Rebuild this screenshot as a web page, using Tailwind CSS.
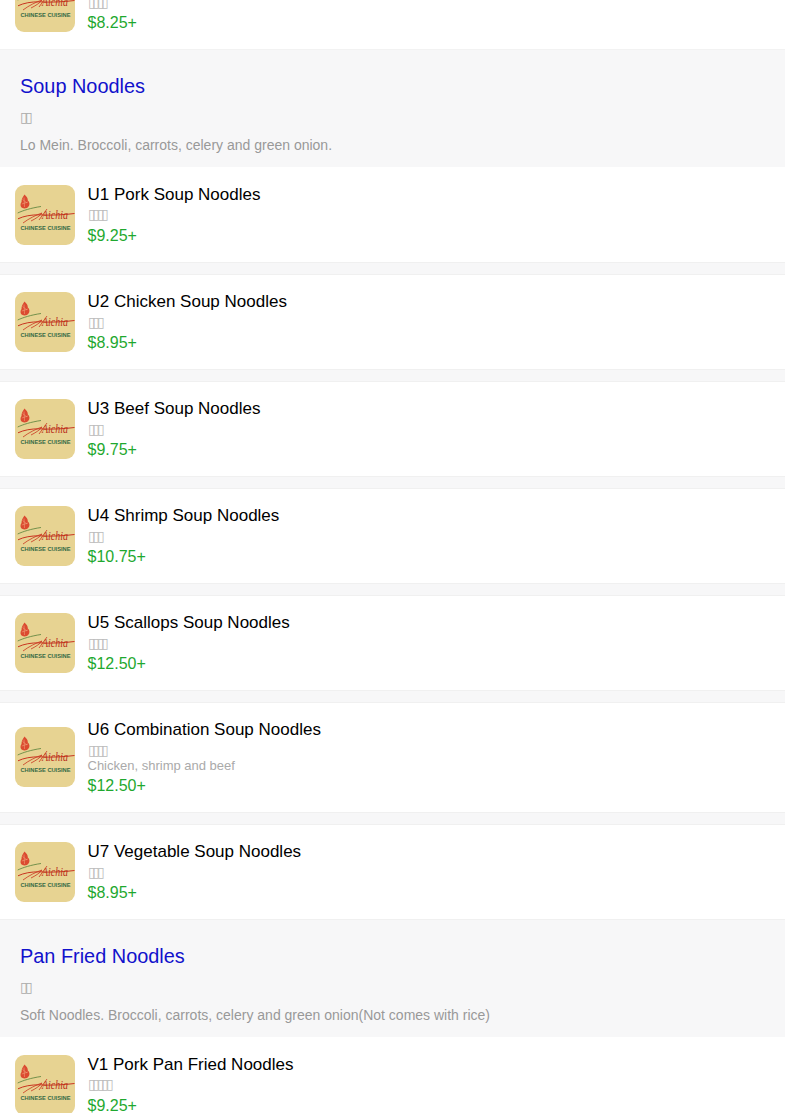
<!DOCTYPE html>
<html><head><meta charset="utf-8"><script src="https://cdn.jsdelivr.net/npm/@tailwindcss/browser@4"></script></head>
<body class="bg-white font-['Liberation_Sans',sans-serif]">
<svg width="0" height="0" class="absolute"><defs>
<symbol id="logo" viewBox="0 0 60 60">
<rect width="60" height="60" rx="9" fill="#e7d392"/>
<path d="M9.5 9.5 C11.5 11.5 13 13 12.8 15.5 C14.8 17 15 20 13.5 21.5 C12.5 23.5 9 24 7 22.8 C5 21.5 5.3 18.5 6.5 17 C6.3 14 8 12 9.5 9.5Z" fill="#db4a30"/>
<path d="M7.5 14.5 L12 18 M6.8 19 L13 17 M9 12.5 L9.5 22" stroke="#efa079" stroke-width=".6" fill="none"/>
<path d="M2.7 28 C8 25.5 16 23 26 21.5" stroke="#55803a" stroke-width=".8" fill="none"/>
<path d="M3 33.8 C9 31 16 29.8 24 29.8 C36 30.5 48 30 59.5 28.5" stroke="#c9341f" stroke-width="1" fill="none"/>
<path d="M8 38 C14 33.5 21 30 27 28 C25 31 20 34 16 36 M24 35 L32 24" stroke="#c9341f" stroke-width=".8" fill="none"/>
<text x="27" y="33.5" font-family="'Liberation Serif',serif" font-style="italic" font-size="12" fill="#b92f1b" textLength="26" lengthAdjust="spacingAndGlyphs">Aichia</text>
<text x="5.5" y="44.8" font-family="'Liberation Sans',sans-serif" font-weight="700" font-size="6" fill="#356a45" textLength="50" lengthAdjust="spacingAndGlyphs">CHINESE CUISINE</text>
</symbol></defs></svg>
<div class="h-[1113px] overflow-hidden bg-[#f7f7f8]">

<div class="-mt-[46px] flex items-center gap-[12.5px] bg-white h-[95px] pl-[15px]">
<svg class="w-[60px] h-[60px] shrink-0"><use href="#logo"/></svg>
<div class="flex flex-col"><div class="h-5"></div><div class="text-[14px] leading-[15px] mt-[3.5px] tracking-[-3.4px] text-[#bbb]">▯▯▯▯</div><div class="text-base leading-5 mt-[2.5px] -mb-[1px] text-[#1fa82f]">$8.25+</div></div>
</div>

<div class="h-[118px] bg-[#f7f7f8] border-t border-[#f2f2f2] px-5 pt-[24px]">
<div class="text-[19.9px] leading-6 text-[#1111cc]">Soup Noodles</div>
<div class="text-[14px] leading-4 mt-[11px] tracking-[-3.4px] text-[#aaa]">▯▯</div>
<div class="text-sm leading-5 mt-[10px] text-[#999]">Lo Mein. Broccoli, carrots, celery and green onion.</div>
</div>

<div class="flex flex-col gap-[11px]">
<div class="flex items-center gap-[12.5px] bg-white border-b border-[#f0f0f0] pl-[15px] py-[17.5px]">
<svg class="w-[60px] h-[60px] shrink-0"><use href="#logo"/></svg>
<div class="flex flex-col"><div class="text-[17px] leading-5 text-black">U1 Pork Soup Noodles</div><div class="text-[14px] leading-[15px] mt-[2.5px] tracking-[-3.4px] text-[#bbb]">▯▯▯▯</div><div class="text-base leading-5 mt-[3.5px] -mb-[1px] text-[#1fa82f]">$9.25+</div></div>
</div>
<div class="flex items-center gap-[12.5px] bg-white border-y border-[#f0f0f0] pl-[15px] py-[17px]">
<svg class="w-[60px] h-[60px] shrink-0"><use href="#logo"/></svg>
<div class="flex flex-col"><div class="text-[17px] leading-5 text-black">U2 Chicken Soup Noodles</div><div class="text-[14px] leading-[15px] mt-[2.5px] tracking-[-3.4px] text-[#bbb]">▯▯▯</div><div class="text-base leading-5 mt-[3.5px] -mb-[1px] text-[#1fa82f]">$8.95+</div></div>
</div>
<div class="flex items-center gap-[12.5px] bg-white border-y border-[#f0f0f0] pl-[15px] py-[17px]">
<svg class="w-[60px] h-[60px] shrink-0"><use href="#logo"/></svg>
<div class="flex flex-col"><div class="text-[17px] leading-5 text-black">U3 Beef Soup Noodles</div><div class="text-[14px] leading-[15px] mt-[2.5px] tracking-[-3.4px] text-[#bbb]">▯▯▯</div><div class="text-base leading-5 mt-[3.5px] -mb-[1px] text-[#1fa82f]">$9.75+</div></div>
</div>
<div class="flex items-center gap-[12.5px] bg-white border-y border-[#f0f0f0] pl-[15px] py-[17px]">
<svg class="w-[60px] h-[60px] shrink-0"><use href="#logo"/></svg>
<div class="flex flex-col"><div class="text-[17px] leading-5 text-black">U4 Shrimp Soup Noodles</div><div class="text-[14px] leading-[15px] mt-[2.5px] tracking-[-3.4px] text-[#bbb]">▯▯▯</div><div class="text-base leading-5 mt-[3.5px] -mb-[1px] text-[#1fa82f]">$10.75+</div></div>
</div>
<div class="flex items-center gap-[12.5px] bg-white border-y border-[#f0f0f0] pl-[15px] py-[17px]">
<svg class="w-[60px] h-[60px] shrink-0"><use href="#logo"/></svg>
<div class="flex flex-col"><div class="text-[17px] leading-5 text-black">U5 Scallops Soup Noodles</div><div class="text-[14px] leading-[15px] mt-[2.5px] tracking-[-3.4px] text-[#bbb]">▯▯▯▯</div><div class="text-base leading-5 mt-[3.5px] -mb-[1px] text-[#1fa82f]">$12.50+</div></div>
</div>
<div class="flex items-center gap-[12.5px] bg-white border-y border-[#f0f0f0] pl-[15px] py-[17px]">
<svg class="w-[60px] h-[60px] shrink-0 mb-[1px]"><use href="#logo"/></svg>
<div class="flex flex-col"><div class="text-[17px] leading-5 text-black">U6 Combination Soup Noodles</div><div class="text-[14px] leading-[15px] mt-[2.5px] tracking-[-3.4px] text-[#bbb]">▯▯▯▯</div><div class="text-[13px] leading-[15px] text-[#aaa]">Chicken, shrimp and beef</div><div class="text-base leading-5 mt-[3.5px] -mb-[1px] text-[#1fa82f]">$12.50+</div></div>
</div>
<div class="flex items-center gap-[12.5px] bg-white border-y border-[#f0f0f0] pl-[15px] py-[17px]">
<svg class="w-[60px] h-[60px] shrink-0"><use href="#logo"/></svg>
<div class="flex flex-col"><div class="text-[17px] leading-5 text-black">U7 Vegetable Soup Noodles</div><div class="text-[14px] leading-[15px] mt-[2.5px] tracking-[-3.4px] text-[#bbb]">▯▯▯</div><div class="text-base leading-5 mt-[3.5px] -mb-[1px] text-[#1fa82f]">$8.95+</div></div>
</div>
</div>

<div class="h-[117px] bg-[#f7f7f8] px-5 pt-[24px]">
<div class="text-[19.9px] leading-6 text-[#1111cc]">Pan Fried Noodles</div>
<div class="text-[14px] leading-4 mt-[11px] tracking-[-3.4px] text-[#aaa]">▯▯</div>
<div class="text-sm leading-5 mt-[10px] text-[#999]">Soft Noodles. Broccoli, carrots, celery and green onion(Not comes with rice)</div>
</div>
<div class="flex items-center gap-[12.5px] bg-white pl-[15px] py-[17.5px]">
<svg class="w-[60px] h-[60px] shrink-0"><use href="#logo"/></svg>
<div class="flex flex-col"><div class="text-[17px] leading-5 text-black">V1 Pork Pan Fried Noodles</div><div class="text-[14px] leading-[15px] mt-[2.5px] tracking-[-3.4px] text-[#bbb]">▯▯▯▯▯</div><div class="text-base leading-5 mt-[3.5px] -mb-[1px] text-[#1fa82f]">$9.25+</div></div>
</div>
</div>
</body></html>
